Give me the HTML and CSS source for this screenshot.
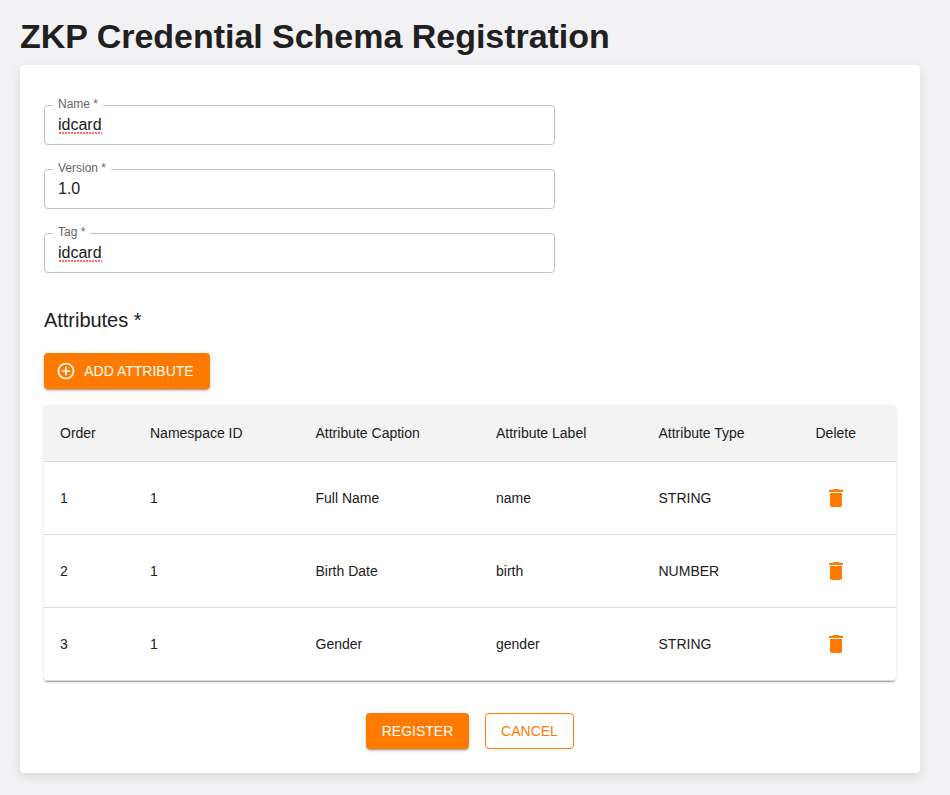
FILE: index.html
```html
<!DOCTYPE html>
<html lang="en">
<head>
<meta charset="utf-8">
<title>ZKP Credential Schema Registration</title>
<link rel="stylesheet" href="styles.css">
</head>
<body>
<main class="page">
  <h1 class="title"><span>ZKP Credential Schema Registration</span></h1>
  <section class="card">
    <div class="fields">
      <fieldset class="field"><legend>Name *</legend><span class="value misspelled">idcard</span></fieldset>
      <fieldset class="field"><legend>Version *</legend><span class="value">1.0</span></fieldset>
      <fieldset class="field"><legend>Tag *</legend><span class="value misspelled">idcard</span></fieldset>
    </div>
    <h2 class="subtitle">Attributes *</h2>
    <button class="btn primary add"><svg class="plus" viewBox="0 0 24 24"><path d="M13 7h-2v4H7v2h4v4h2v-4h4v-2h-4V7zm-1-5C6.48 2 2 6.48 2 12s4.48 10 10 10 10-4.480 10-10S17.52 2 12 2zm0 18c-4.410 0-8-3.590-8-8s3.590-8 8-8 8 3.590 8 8-3.590 8-8 8z"/></svg><span>ADD ATTRIBUTE</span></button>
    <div class="paper">
      <table class="table">
        <colgroup><col class="c1"><col class="c2"><col class="c3"><col class="c4"><col class="c5"><col class="c6"></colgroup>
        <thead><tr><th>Order</th><th>Namespace ID</th><th>Attribute Caption</th><th>Attribute Label</th><th>Attribute Type</th><th>Delete</th></tr></thead>
        <tbody>
          <tr><td>1</td><td>1</td><td>Full Name</td><td>name</td><td>STRING</td><td><svg class="trash" viewBox="0 0 24 24"><path d="M6 19c0 1.100.900 2 2 2h8c1.100 0 2-.900 2-2V7H6v12zM19 4h-3.500l-1-1h-5l-1 1H5v2h14V4z"/></svg></td></tr>
          <tr><td>2</td><td>1</td><td>Birth Date</td><td>birth</td><td>NUMBER</td><td><svg class="trash" viewBox="0 0 24 24"><path d="M6 19c0 1.100.900 2 2 2h8c1.100 0 2-.900 2-2V7H6v12zM19 4h-3.500l-1-1h-5l-1 1H5v2h14V4z"/></svg></td></tr>
          <tr><td>3</td><td>1</td><td>Gender</td><td>gender</td><td>STRING</td><td><svg class="trash" viewBox="0 0 24 24"><path d="M6 19c0 1.100.900 2 2 2h8c1.100 0 2-.900 2-2V7H6v12zM19 4h-3.500l-1-1h-5l-1 1H5v2h14V4z"/></svg></td></tr>
        </tbody>
      </table>
    </div>
    <div class="actions">
      <button class="btn primary register">REGISTER</button>
      <button class="btn outlined">CANCEL</button>
    </div>
  </section>
</main>
</body>
</html>
```
FILE: styles.css
```css
* { box-sizing: border-box; }
body { margin: 0; background: #f2f2f5; color: #202020; font-family: "Liberation Sans", Arial, sans-serif; }
.page { padding: 8px 30px 22px 20px; }
.title { margin: 0; height: 57px; font-size: 34px; line-height: 57px; font-weight: 700; letter-spacing: -.03px; white-space: nowrap; }
.card { height: 708px; padding: 32px 24px 24px; background: #fff; border-radius: 4px; box-shadow: 0 4px 12px rgba(0,0,0,.11); }
.fields { width: 511px; display: flex; flex-direction: column; gap: 16px; }
.field { height: 48px; margin: 0; padding: 0 13px; min-width: 0; border: 1px solid #c1c1c1; border-radius: 4px; }
.field legend { height: 16px; padding: 0 5px; margin-left: -5px; font-size: 12px; line-height: 14px; color: #666; }
.value { display: inline-block; font-size: 16px; line-height: 18px; margin-top: 3px; }
.misspelled { background: repeating-linear-gradient(90deg, transparent 0 1px, #ff6e66 1px 3px) 0 100% / 100% 2px no-repeat; }
.subtitle { margin: 31px 0 16px; height: 33px; font-size: 20px; line-height: 33px; font-weight: 400; letter-spacing: -.03px; }
.btn { height: 36px; display: inline-flex; align-items: center; justify-content: center; font: 400 14px/24px "Liberation Sans", Arial, sans-serif; border: 0; border-radius: 4px; padding: 0; }
.primary { background: #ff7a00; color: #fff; box-shadow: 0 3px 1px -2px rgba(0,0,0,.2), 0 2px 2px rgba(0,0,0,.14), 0 1px 5px rgba(0,0,0,.12); }
.add { display: flex; width: 166px; gap: 8px; padding-right: 4px; }
.plus { width: 20px; height: 20px; fill: currentColor; }
.paper { margin-top: 16px; width: 852px; border-radius: 4px; overflow: hidden; box-shadow: 0 2px 1px -1px rgba(0,0,0,.2), 0 1px 1px rgba(0,0,0,.14), 0 1px 3px rgba(0,0,0,.12); }
.table { width: 852px; table-layout: fixed; border-spacing: 0; font-size: 14px; }
.c1 { width: 90px; } .c2 { width: 165.500px; } .c3 { width: 180.500px; } .c4 { width: 162.500px; } .c5 { width: 157px; }
th, td { padding: 0 16px; text-align: left; font-weight: 400; border-bottom: 1px solid #dadada; }
th { height: 57px; background: #f3f3f3; white-space: nowrap; }
td { height: 73px; }
.trash { display: block; width: 24px; height: 24px; margin-left: 8px; fill: #ff7a00; }
.actions { display: flex; justify-content: center; gap: 16px; margin-top: 32px; }
.register { width: 103px; }
.outlined { width: 89px; color: #ff7a00; background: #fff; border: 1px solid #ff7a00; }
```
